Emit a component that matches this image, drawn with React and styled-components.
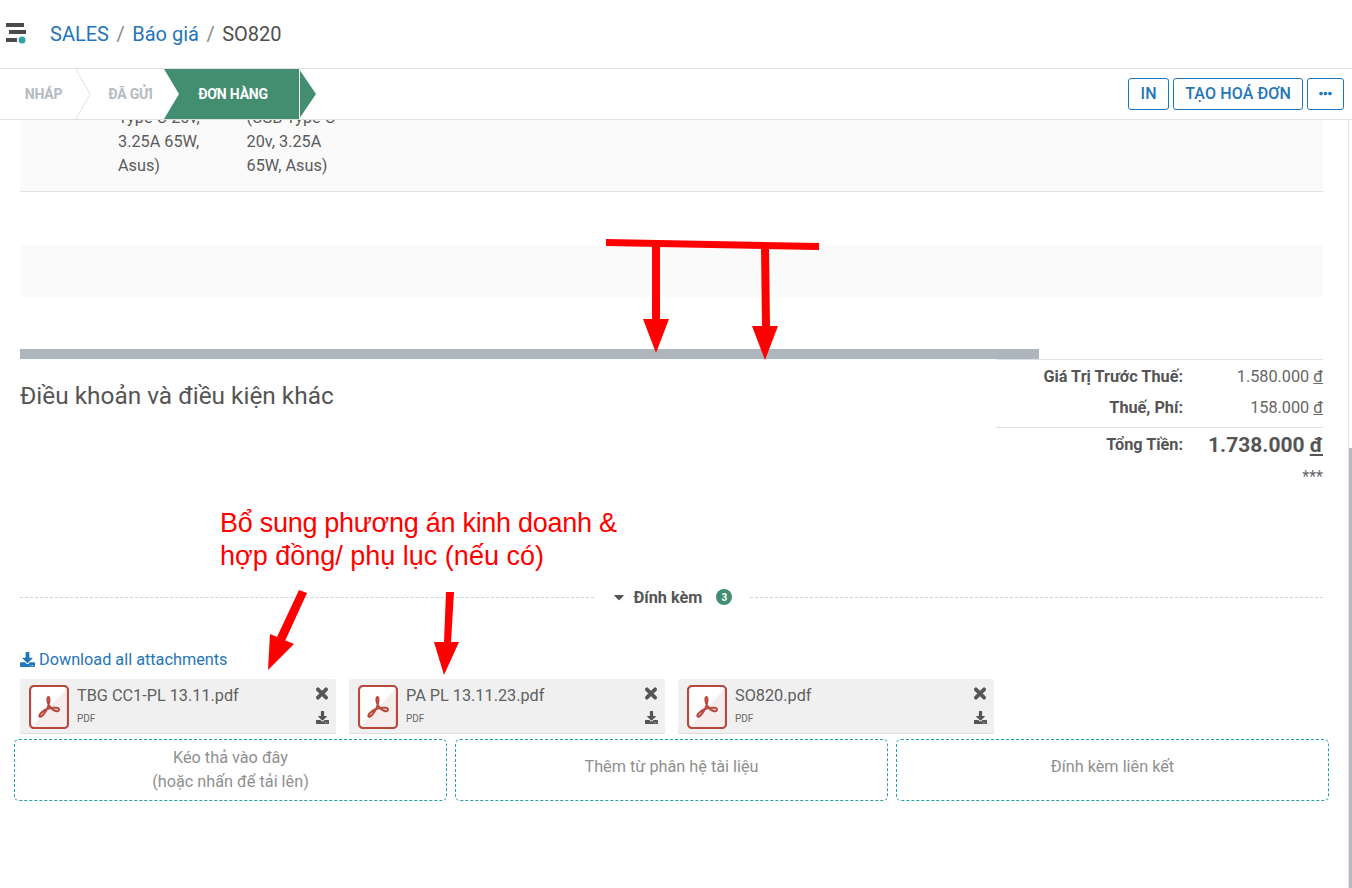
import React from "react";
import styled, { createGlobalStyle } from "styled-components";
import { FaCaretDown, FaDownload, FaEllipsisH, FaTimes } from "react-icons/fa";

const GlobalStyle = createGlobalStyle`
  html, body {
    margin: 0;
    padding: 0;
    height: 100%;
    overflow: hidden;
    background: #fff;
    font-family: Roboto, "Noto Sans", sans-serif;
    color: #555;
  }
`;

const Page = styled.div`
  position: relative;
  width: 1352px;
  height: 888px;
  overflow: hidden;
  display: flex;
  flex-direction: column;
`;

const Header = styled.header`
  height: 69px;
  flex: none;
  display: flex;
  align-items: center;
  gap: 23px;
  padding-left: 6px;
  box-sizing: border-box;
  border-bottom: 1px solid #dee2e6;
`;

const Breadcrumb = styled.div`
  display: flex;
  align-items: center;
  font-size: 20px;
  color: #4f4f4f;
`;

const Crumb = styled.a`
  color: #1f76ba;
`;

const Slash = styled.span`
  color: #888;
  margin: 0 7.5px;
`;

const StatusBar = styled.div`
  position: relative;
  z-index: 2;
  height: 51px;
  flex: none;
  display: flex;
  align-items: center;
  justify-content: space-between;
  box-sizing: border-box;
  background: #fff;
  border-bottom: 1px solid #dee2e6;
  padding-right: 8px;
`;

const Steps = styled.div`
  display: flex;
  height: 50px;
`;

const Step = styled.div`
  position: relative;
  display: flex;
  align-items: center;
  justify-content: center;
  height: 50px;
  width: ${(p) => p.$width}px;
  padding: 0 ${(p) => p.$right}px 0 ${(p) => p.$left}px;
  box-sizing: border-box;
  font-size: 14px;
  font-weight: 700;
  color: #b4bbc2;
  letter-spacing: -0.2px;
`;

const ActiveStep = styled.div`
  position: relative;
  display: flex;
  align-items: center;
  justify-content: center;
  width: 152px;
  height: 50px;
  margin-left: -1px;
  padding-right: 14px;
  box-sizing: border-box;
  background: #438e70;
  clip-path: polygon(0 0, 135px 0, 152px 25px, 135px 50px, 0 50px, 15px 25px);
  color: #fff;
  font-size: 14px;
  font-weight: 700;
  letter-spacing: -0.2px;
`;

const ActiveCut = styled.i`
  position: absolute;
  left: 135px;
  top: 0;
  bottom: 0;
  width: 1px;
  background: #fff;
`;

const Chevron = styled.svg`
  position: absolute;
  right: -1px;
  top: 0;
`;

const Actions = styled.div`
  display: flex;
  gap: 4px;
`;

const ActionButton = styled.button`
  height: 32px;
  padding: 0 ${(p) => p.$pad}px 2px;
  display: flex;
  align-items: center;
  box-sizing: border-box;
  border: 1px solid #1f76ba;
  border-radius: 3px;
  background: #fff;
  color: #1f76ba;
  font-family: inherit;
  font-size: 16px;
  font-weight: 500;
  letter-spacing: 0.12px;
`;

const Content = styled.main`
  flex: 1;
  min-height: 0;
  overflow: hidden;
  display: flex;
  flex-direction: column;
`;

const LineRow = styled.div`
  height: 96px;
  flex: none;
  margin: -24px 29px 0 20px;
  box-sizing: border-box;
  background: #fafafa;
  border-bottom: 1px solid #dee2e6;
  display: flex;
  padding-left: 98px;
  gap: 46.5px;
  font-size: 16.25px;
  line-height: 24px;
  color: #5a5a5a;
`;

const LineCell = styled.div`
  width: 82px;
  padding-top: 10px;
  white-space: nowrap;
`;

const EmptyRow = styled.div`
  height: 52px;
  flex: none;
  margin: 53px 29px 0 20px;
  background: #fafafa;
`;

const SummaryBar = styled.div`
  height: 10px;
  width: 1019px;
  flex: none;
  margin: 52px 0 0 20px;
  background: #adb5bd;
`;

const SummaryRow = styled.div`
  display: flex;
  justify-content: space-between;
  flex: none;
  height: 130px;
  margin: 0 29px 0 20px;
`;

const Terms = styled.h2`
  margin: 21px 0 0;
  font-size: 24.4px;
  line-height: 32px;
  font-weight: 400;
  color: #555;
`;

const Totals = styled.div`
  width: 327px;
  border-top: 1px solid #dee2e6;
`;

const TotalLine = styled.div`
  display: grid;
  grid-template-columns: 187px 140px;
  align-items: center;
  height: ${(p) => p.$height}px;
  font-size: 16.25px;
`;

const TotalLabel = styled.b`
  text-align: right;
  font-weight: 700;
  color: #555;
`;

const TotalValue = styled.span`
  text-align: right;
  color: #666;
`;

const GrandValue = styled.b`
  text-align: right;
  font-size: 21px;
  font-weight: 700;
  color: #555;
`;

const TotalRule = styled.div`
  height: 1px;
  margin-top: 5px;
  background: #dee2e6;
`;

const Note = styled.div`
  text-align: right;
  font-size: 16px;
  color: #666;
  margin-top: 6px;
`;

const Divider = styled.div`
  display: flex;
  align-items: center;
  flex: none;
  margin: 98px 29px 0 20px;
  height: 20px;
`;

const DashLine = styled.div`
  flex: 1;
  border-top: 1px dashed #ced4da;
`;

const DividerTitle = styled.div`
  display: flex;
  align-items: center;
  width: 156px;
  padding-left: 19px;
  box-sizing: border-box;
  font-size: 16.25px;
  font-weight: 700;
  color: #555;
`;

const CaretIcon = styled(FaCaretDown)`
  width: 12px;
  height: 16px;
  margin-right: 9px;
`;

const Badge = styled.span`
  width: 16px;
  height: 16px;
  margin-left: 14px;
  border-radius: 50%;
  background: #438e70;
  color: #fff;
  font-size: 10px;
  font-weight: 700;
  display: flex;
  align-items: center;
  justify-content: center;
`;

const DownloadAll = styled.a`
  display: flex;
  align-items: center;
  gap: 4px;
  flex: none;
  margin: 42px 0 0 20px;
  height: 20px;
  font-size: 16.25px;
  color: #1f76ba;
`;

const Attachments = styled.div`
  display: flex;
  gap: 13px;
  flex: none;
  margin: 10px 0 0 20px;
`;

const Attachment = styled.div`
  width: 316px;
  height: 54px;
  display: flex;
  box-sizing: border-box;
  padding: 6px 7px 0 9px;
  background: #f0f0f0;
  border-radius: 2px;
  box-shadow: 0 1px 0 #dedede;
`;

const AttachmentText = styled.div`
  flex: 1;
  margin-left: 8px;
`;

const FileName = styled.div`
  font-size: 16.25px;
  line-height: 20px;
  margin-top: 1px;
  color: #5f5f5f;
`;

const FileType = styled.div`
  font-size: 10px;
  line-height: 12px;
  margin-top: 7px;
  color: #666;
`;

const AttachmentIcons = styled.div`
  display: flex;
  flex-direction: column;
  align-items: flex-end;
  gap: 11px;
  padding-top: 2px;
  color: #555;
`;

const CloseIcon = styled(FaTimes)`
  width: 12px;
  height: 17px;
  margin: -2px 1px -2px 0;
  stroke: currentColor;
  stroke-width: 25px;
`;

const DropZones = styled.div`
  display: grid;
  grid-template-columns: repeat(3, 433px);
  gap: 8px;
  flex: none;
  margin: 6px 0 0 14px;
`;

const DropZone = styled.div`
  height: 62px;
  box-sizing: border-box;
  display: flex;
  align-items: center;
  justify-content: center;
  text-align: center;
  border: 1px dashed #26a0a8;
  border-radius: 5px;
  padding-bottom: ${(p) => (p.$single ? 6 : 0)}px;
  font-size: 16.25px;
  line-height: 24px;
  color: #8f8f8f;
`;

const Scrollbar = styled.div`
  position: absolute;
  right: 0;
  top: 448px;
  bottom: 0;
  width: 3px;
  background: #b4bac0;
`;

const Edge = styled.div`
  position: absolute;
  right: 3px;
  top: 69px;
  bottom: 0;
  width: 1px;
  background: #e2e5e9;
`;

const Annotation = styled.svg`
  position: absolute;
  left: 0;
  top: 0;
  z-index: 3;
  pointer-events: none;
`;

const AnnotationText = styled.div`
  position: absolute;
  left: 220px;
  top: 507px;
  z-index: 3;
  font-family: "Liberation Sans", Arial, sans-serif;
  font-size: 27px;
  line-height: 33px;
  color: #ff0000;
  white-space: nowrap;
`;

const TightLine = styled.span`
  letter-spacing: -0.28px;
`;

function Logo() {
  return (
    <svg width="21" height="22" viewBox="0 0 21 22">
      <rect x="0" y="0" width="18" height="4" fill="#4a4a4a" />
      <rect x="3" y="7" width="17" height="4" fill="#4a4a4a" />
      <rect x="0" y="15" width="11" height="4" fill="#4a4a4a" />
      <circle cx="16" cy="17" r="3.5" fill="#2fa5a5" />
    </svg>
  );
}

function PdfIcon() {
  return (
    <svg width="40" height="44" viewBox="0 0 40 44" style={{ flex: "none" }}>
      <rect x="1" y="1" width="38" height="42" rx="4" fill="#fff" />
      <path d="M38 3 L38 40 Q38 42 36 42 L3 42 Z" fill="#f6eceb" />
      <rect x="1" y="1" width="38" height="42" rx="4" fill="none" stroke="#b8483c" strokeWidth="2.2" />
      <path
        d="M19.5 12 C17.5 13 18.5 18 20.5 21 C23.5 26 29 27.5 30 25 C31 22.5 25 22 19.5 23.5 C14 25 9.5 30 10.5 31.5 C11.5 33 16.5 28 18.5 23 C20 19 21.5 13 19.5 12 Z"
        fill="none"
        stroke="#b8483c"
        strokeWidth="2"
      />
    </svg>
  );
}

const files = ["TBG CC1-PL 13.11.pdf", "PA PL 13.11.23.pdf", "SO820.pdf"];

export default function App() {
  return (
    <Page>
      <GlobalStyle />
      <Header>
        <Logo />
        <Breadcrumb>
          <Crumb>SALES</Crumb>
          <Slash>/</Slash>
          <Crumb>Báo giá</Crumb>
          <Slash>/</Slash>
          <span>SO820</span>
        </Breadcrumb>
      </Header>
      <StatusBar>
        <Steps>
          <Step $width={90} $left={0} $right={3}>
            NHÁP
            <Chevron width="16" height="50" viewBox="0 0 16 50">
              <path d="M1 0 L15 25 L1 50" fill="none" stroke="#dee2e6" />
            </Chevron>
          </Step>
          <Step $width={75} $left={6} $right={0}>ĐÃ GỬI</Step>
          <ActiveStep>
            ĐƠN HÀNG
            <ActiveCut />
          </ActiveStep>
        </Steps>
        <Actions>
          <ActionButton $pad={11.5}>IN</ActionButton>
          <ActionButton $pad={11}>TẠO HOÁ ĐƠN</ActionButton>
          <ActionButton $pad={11}>
            <FaEllipsisH size={13} />
          </ActionButton>
        </Actions>
      </StatusBar>
      <Content>
        <LineRow>
          <LineCell>
            Type C 20v,
            <br />
            3.25A 65W,
            <br />
            Asus)
          </LineCell>
          <LineCell>
            (USB Type C
            <br />
            20v, 3.25A
            <br />
            65W, Asus)
          </LineCell>
        </LineRow>
        <EmptyRow />
        <SummaryBar />
        <SummaryRow>
          <Terms>Điều khoản và điều kiện khác</Terms>
          <Totals>
            <TotalLine $height={32}>
              <TotalLabel>Giá Trị Trước Thuế:</TotalLabel>
              <TotalValue>
                1.580.000 <u>đ</u>
              </TotalValue>
            </TotalLine>
            <TotalLine $height={30}>
              <TotalLabel>Thuế, Phí:</TotalLabel>
              <TotalValue>
                158.000 <u>đ</u>
              </TotalValue>
            </TotalLine>
            <TotalRule />
            <TotalLine $height={33}>
              <TotalLabel>Tổng Tiền:</TotalLabel>
              <GrandValue>
                1.738.000 <u>đ</u>
              </GrandValue>
            </TotalLine>
            <Note>***</Note>
          </Totals>
        </SummaryRow>
        <Divider>
          <DashLine />
          <DividerTitle>
            <CaretIcon />
            Đính kèm
            <Badge>3</Badge>
          </DividerTitle>
          <DashLine />
        </Divider>
        <DownloadAll>
          <FaDownload size={15} />
          Download all attachments
        </DownloadAll>
        <Attachments>
          {files.map((name) => (
            <Attachment key={name}>
              <PdfIcon />
              <AttachmentText>
                <FileName>{name}</FileName>
                <FileType>PDF</FileType>
              </AttachmentText>
              <AttachmentIcons>
                <CloseIcon />
                <FaDownload size={13} />
              </AttachmentIcons>
            </Attachment>
          ))}
        </Attachments>
        <DropZones>
          <DropZone>
            Kéo thả vào đây
            <br />
            (hoặc nhấn để tải lên)
          </DropZone>
          <DropZone $single>Thêm từ phân hệ tài liệu</DropZone>
          <DropZone $single>Đính kèm liên kết</DropZone>
        </DropZones>
      </Content>
      <Edge />
      <Scrollbar />
      <AnnotationText>
        <TightLine>Bổ sung phương án kinh doanh &amp;</TightLine>
        <br />
        hợp đồng/ phụ lục (nếu có)
      </AnnotationText>
      <Annotation width="1352" height="888" viewBox="0 0 1352 888">
        <g fill="#ff0000">
          <polygon points="606,239 819,243 819,250 606,246" />
          <rect x="652" y="245" width="8" height="75" />
          <polygon points="643,319 669,319 656,353" />
          <polygon points="761,247 769,247 770,326 762,326" />
          <polygon points="752,326 778,326 765,360" />
          <polygon points="299,590 307,593 285,641 277,637" />
          <polygon points="270,634 294,644 268,670" />
          <polygon points="446,592 454,592 451,642 444,642" />
          <polygon points="434,642 459,642 444,675" />
        </g>
      </Annotation>
    </Page>
  );
}
